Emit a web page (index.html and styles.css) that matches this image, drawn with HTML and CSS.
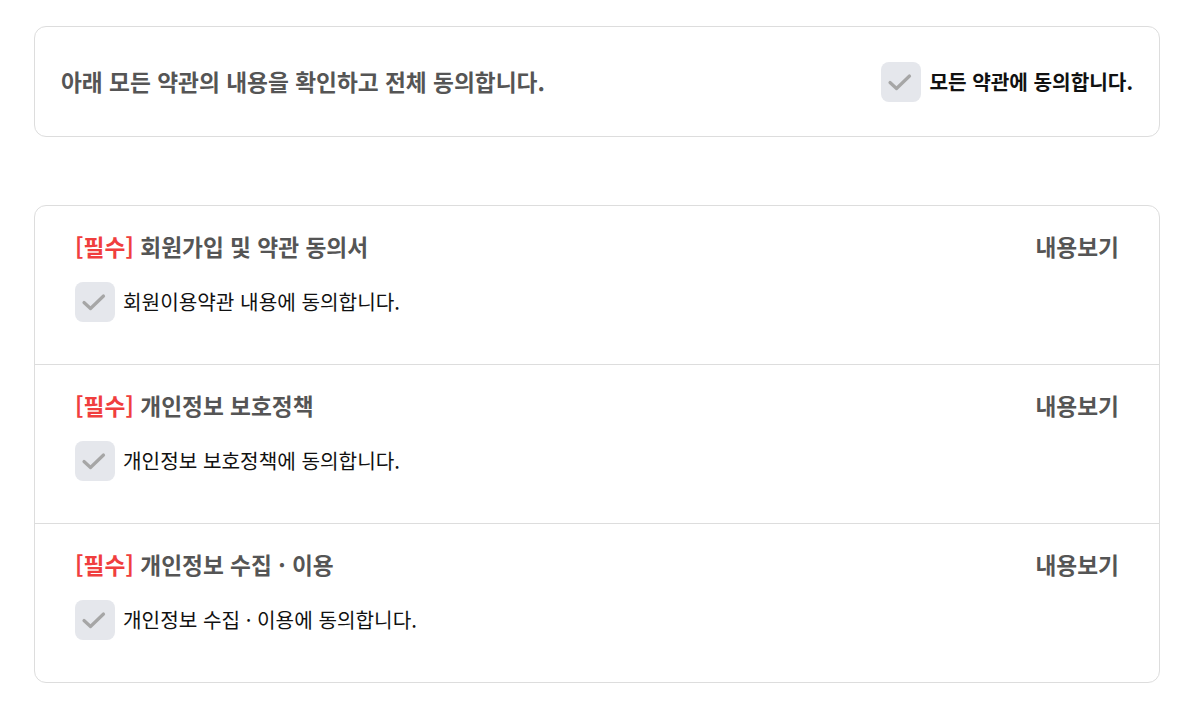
FILE: index.html
```html
<!DOCTYPE html>
<html lang="ko">
<head>
  <meta charset="UTF-8" />
  <meta name="viewport" content="width=device-width, initial-scale=1.0" />
  <title>약관 동의</title>
  <link rel="stylesheet" href="styles.css">
</head>
<body>
  <main class="terms">
    <!-- Agree to all -->
    <section class="card all-agree">
      <p class="all-agree-desc">아래 모든 약관의 내용을 확인하고 전체 동의합니다.</p>
      <label class="check check-strong">
        <span class="check-box">
          <svg viewBox="0 0 40 40" width="40" height="40"><path d="M9 20.5l6.5 6 13-12.5" /></svg>
        </span>
        모든 약관에 동의합니다.
      </label>
    </section>

    <!-- Individual terms -->
    <section class="card term-list">
      <div class="term">
        <div class="term-head">
          <h3 class="term-title"><span class="required">[필수]</span> 회원가입 및 약관 동의서</h3>
          <a class="term-view">내용보기</a>
        </div>
        <label class="check">
          <span class="check-box">
            <svg viewBox="0 0 40 40" width="40" height="40"><path d="M9 20.5l6.5 6 13-12.5" /></svg>
          </span>
          회원이용약관 내용에 동의합니다.
        </label>
      </div>

      <div class="term">
        <div class="term-head">
          <h3 class="term-title"><span class="required">[필수]</span> 개인정보 보호정책</h3>
          <a class="term-view">내용보기</a>
        </div>
        <label class="check">
          <span class="check-box">
            <svg viewBox="0 0 40 40" width="40" height="40"><path d="M9 20.5l6.5 6 13-12.5" /></svg>
          </span>
          개인정보 보호정책에 동의합니다.
        </label>
      </div>

      <div class="term">
        <div class="term-head">
          <h3 class="term-title"><span class="required">[필수]</span> 개인정보 수집 · 이용</h3>
          <a class="term-view">내용보기</a>
        </div>
        <label class="check">
          <span class="check-box">
            <svg viewBox="0 0 40 40" width="40" height="40"><path d="M9 20.5l6.5 6 13-12.5" /></svg>
          </span>
          개인정보 수집 · 이용에 동의합니다.
        </label>
      </div>
    </section>
  </main>
</body>
</html>
```

FILE: styles.css
```css
:root {
  --border: #dddddd;
  --text: #111111;
  --text-sub: #555555;
  --red: #f03e3e;
  --box-bg: #e5e7ec;
  --check: #a6a6a6;
  --radius: 12px;
}

* {
  box-sizing: border-box;
  margin: 0;
  padding: 0;
}

body {
  font-family: "Noto Sans CJK KR", "Noto Sans", sans-serif;
  color: var(--text);
  background: #fff;
}

.terms {
  display: flex;
  flex-direction: column;
  gap: 68px;
  padding: 26px 35px 26px 34px;
}

.card {
  border: 1px solid var(--border);
  border-radius: var(--radius);
  background: #fff;
}

/* Agree all */
.all-agree {
  height: 111px;
  display: flex;
  align-items: center;
  justify-content: space-between;
  padding: 0 26px;
}
.all-agree-desc {
  font-size: 22.7px;
  font-weight: 700;
  line-height: 30px;
  color: var(--text-sub);
}

/* Checkbox */
.check {
  display: flex;
  align-items: center;
  gap: 8px;
  font-size: 20.2px;
  line-height: 28px;
  cursor: pointer;
}
.check-strong {
  font-weight: 700;
}
.check-box {
  width: 40px;
  height: 40px;
  border-radius: 8px;
  background: var(--box-bg);
  display: flex;
}
.check-box path {
  fill: none;
  stroke: var(--check);
  stroke-width: 3.2;
  stroke-linecap: round;
  stroke-linejoin: round;
}

/* Terms list */
.term {
  padding: 26px 40px 42px;
  border-bottom: 1px solid var(--border);
}
.term:last-child {
  border-bottom: none;
}
.term-head {
  display: flex;
  justify-content: space-between;
  align-items: center;
  height: 30px;
  margin-bottom: 20px;
}
.term-title,
.term-view {
  font-size: 22.7px;
  font-weight: 700;
  line-height: 30px;
  color: var(--text-sub);
}
.term-view {
  cursor: pointer;
}
.required {
  color: var(--red);
}
```
